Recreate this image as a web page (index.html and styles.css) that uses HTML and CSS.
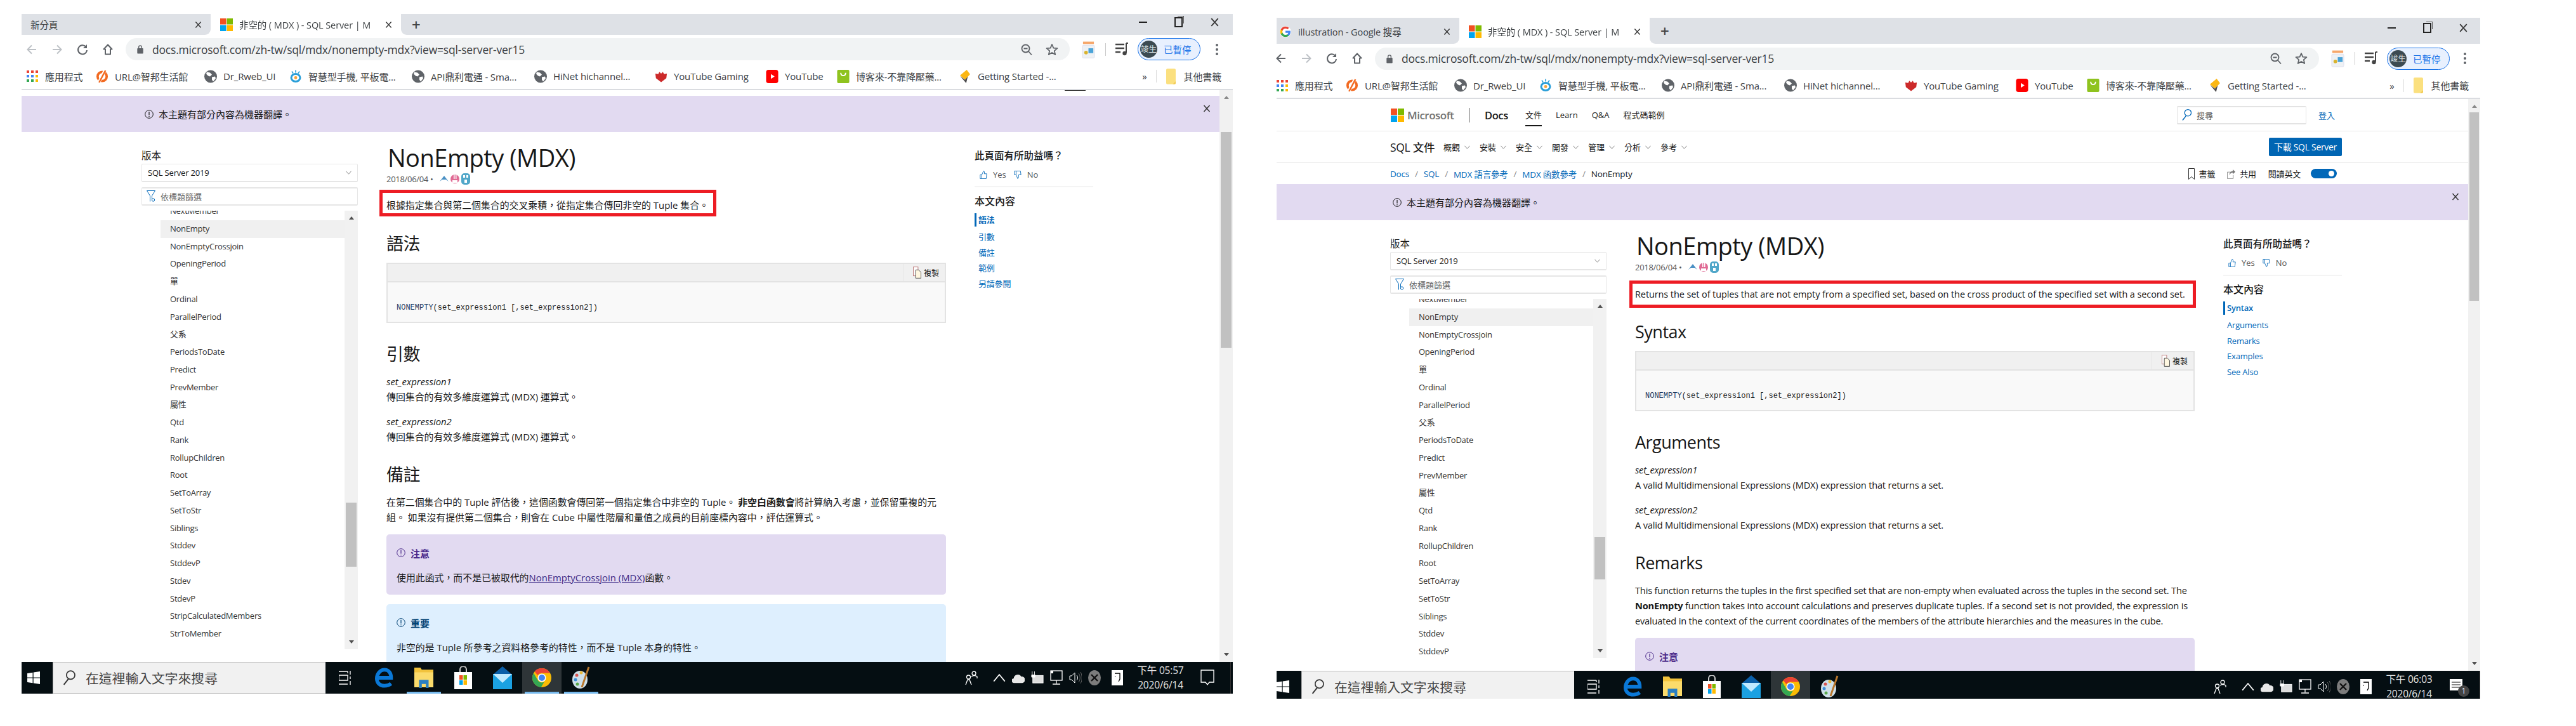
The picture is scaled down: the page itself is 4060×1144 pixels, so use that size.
FILE: index.html
```html
<!DOCTYPE html>
<html lang="zh-Hant">
<head>
  <meta charset="UTF-8">
  <title>NonEmpty (MDX) - two windows</title>
  <link rel="stylesheet" href="styles.css">
</head>
<body>

<!-- shared icons -->
<svg class="sprite" xmlns="http://www.w3.org/2000/svg">
  <symbol id="ms" viewBox="0 0 20 20"><rect width="9.5" height="9.5" fill="#f25022"/><rect x="10.5" width="9.5" height="9.5" fill="#7fba00"/><rect y="10.5" width="9.5" height="9.5" fill="#00a4ef"/><rect x="10.5" y="10.5" width="9.5" height="9.5" fill="#ffb900"/></symbol>
  <symbol id="google" viewBox="0 0 24 24"><circle cx="12" cy="12" r="12" fill="#fff"/><path fill="#4285F4" d="M22.56 12.25c0-.78-.07-1.53-.2-2.25H12v4.26h5.92c-.26 1.37-1.04 2.53-2.21 3.31v2.77h3.57c2.08-1.92 3.28-4.74 3.28-8.09z"/><path fill="#34A853" d="M12 23c2.97 0 5.46-.98 7.28-2.66l-3.57-2.77c-.98.66-2.23 1.06-3.71 1.06-2.86 0-5.29-1.93-6.16-4.53H2.18v2.84C3.99 20.53 7.7 23 12 23z"/><path fill="#FBBC05" d="M5.84 14.09c-.22-.66-.35-1.36-.35-2.09s.13-1.43.35-2.09V7.07H2.18C1.43 8.55 1 10.22 1 12s.43 3.45 1.18 4.93l3.66-2.84z"/><path fill="#EA4335" d="M12 5.38c1.62 0 3.06.56 4.21 1.64l3.15-3.15C17.45 2.09 14.97 1 12 1 7.7 1 3.99 3.47 2.18 7.07l3.66 2.84c.87-2.6 3.3-4.53 6.16-4.53z"/></symbol>
  <symbol id="close" viewBox="0 0 12 12"><path d="M1.5 1 10.5 11M10.5 1 1.5 11" fill="none" stroke="#333" stroke-width="1.5"/></symbol>
  <symbol id="back" viewBox="0 0 20 20"><path d="M17 10H4M10 3.5 3.5 10l6.5 6.5" fill="none" stroke="currentColor" stroke-width="2"/></symbol>
  <symbol id="forward" viewBox="0 0 20 20"><path d="M3 10h13M10 3.5l6.5 6.5-6.5 6.5" fill="none" stroke="currentColor" stroke-width="2"/></symbol>
  <symbol id="reload" viewBox="0 0 20 20"><path d="M15.5 6A7 7 0 1 0 17 11" fill="none" stroke="#5f6368" stroke-width="2"/><path d="M17 2v6h-6z" fill="#5f6368"/></symbol>
  <symbol id="home" viewBox="0 0 20 20"><path d="M10 2.5 3.5 9.5H6v8h8v-8h2.5z" fill="none" stroke="#5f6368" stroke-width="2" stroke-linejoin="round"/></symbol>
  <symbol id="lock" viewBox="0 0 12 16"><path d="M3.5 7V4.5a2.5 2.5 0 0 1 5 0V7" fill="none" stroke="#5f6368" stroke-width="1.5"/><rect x="1" y="6.5" width="10" height="9" rx="1" fill="#5f6368"/></symbol>
  <symbol id="zoomout" viewBox="0 0 20 20"><circle cx="8.5" cy="8.5" r="6" fill="none" stroke="#5f6368" stroke-width="1.8"/><path d="M13 13l5 5.5M5.5 8.5h6" stroke="#5f6368" stroke-width="1.8"/></symbol>
  <symbol id="star" viewBox="0 0 20 20"><path d="M10 2l2.4 5.6 6 .5-4.6 4 1.4 5.9L10 14.9 4.8 18l1.4-5.9-4.6-4 6-.5z" fill="none" stroke="#5f6368" stroke-width="1.8" stroke-linejoin="round"/></symbol>
  <symbol id="ext" viewBox="0 0 22 30"><rect x="1" y="8" width="20" height="21" rx="2" fill="#eef1f4" stroke="#dde"/><path d="M2 2h18v4H2z" fill="#f6a76b"/><circle cx="7" cy="20" r="3" fill="#d9b32e"/><rect x="11" y="13" width="8" height="8" fill="#4aa3d8"/></symbol>
  <symbol id="queue" viewBox="0 0 22 22"><path d="M1 3h14M1 9h14M1 15h8" stroke="#444" stroke-width="2.4"/><path d="M18 1v15" stroke="#444" stroke-width="2"/><circle cx="15.5" cy="17" r="3.2" fill="#444"/><path d="M18 1h3" stroke="#444" stroke-width="2"/></symbol>
  <symbol id="apps" viewBox="0 0 18 18"><g fill="#ea4335"><rect width="4" height="4"/><rect x="7" width="4" height="4"/><rect x="14" width="4" height="4"/></g><g fill="#4285f4"><rect y="7" width="4" height="4"/><rect x="7" y="7" width="4" height="4"/></g><rect x="14" y="7" width="4" height="4" fill="#fbbc05"/><g fill="#34a853"><rect y="14" width="4" height="4"/><rect x="7" y="14" width="4" height="4"/></g><rect x="14" y="14" width="4" height="4" fill="#fbbc05"/></symbol>
  <symbol id="url" viewBox="0 0 20 22"><circle cx="10" cy="11" r="7.5" fill="none" stroke="#f26a21" stroke-width="4"/><path d="M15 0 4 22" stroke="#fff" stroke-width="5"/><path d="M15.5 1 5 21" stroke="#f26a21" stroke-width="2.6"/></symbol>
  <symbol id="globe" viewBox="0 0 20 20"><circle cx="10" cy="10" r="10" fill="#5f6368"/><path d="M4 3l5 1 3 3-3 3-3-1-3-3zM12 11l5-1 1 3-4 5-2-3z" fill="#fff"/></symbol>
  <symbol id="sinaish" viewBox="0 0 20 20"><ellipse cx="10" cy="12" rx="7" ry="6" fill="none" stroke="#2a9fd8" stroke-width="3"/><circle cx="10" cy="12" r="2.4" fill="#f4a63c"/><path d="M10 0v4M4 2l2 3M16 2l-2 3" stroke="#2a9fd8" stroke-width="1.6"/></symbol>
  <symbol id="ytg" viewBox="0 0 22 22"><path d="M1 6l5 1 2-4 3 3 3-3 2 4 5-1-1 8-9 7-9-7z" fill="#cc2a2a"/></symbol>
  <symbol id="yt" viewBox="0 0 20 22"><rect width="20" height="22" rx="4" fill="#f00"/><path d="M8 7l6 4-6 4z" fill="#fff"/></symbol>
  <symbol id="bag" viewBox="0 0 20 22"><rect width="20" height="22" rx="2" fill="#8fc31f"/><path d="M6 5c0 6 8 6 8 0" fill="none" stroke="#fff" stroke-width="2"/></symbol>
  <symbol id="diamond" viewBox="0 0 20 24"><path d="M13 0l6 8-9 10-9-8z" fill="#fbb714"/><path d="M1 11l9 7 5-6-3 12z" fill="#4d4d4f"/></symbol>
  <symbol id="folder" viewBox="0 0 16 26"><rect width="16" height="26" rx="2" fill="#fbe07f"/><path d="M11 26l5-5v3a2 2 0 0 1-2 2z" fill="#f2cb55"/></symbol>
  <symbol id="chev" viewBox="0 0 10 6"><path d="M.5.5 5 5.5 9.5.5" fill="none" stroke="#777" stroke-width="1"/></symbol>
  <symbol id="info" viewBox="0 0 14 14"><circle cx="7" cy="7" r="6.3" fill="none" stroke="currentColor" stroke-width="1"/><path d="M7 3v5.5M7 10v1.2" stroke="currentColor" stroke-width="1.2"/></symbol>
  <symbol id="funnel" viewBox="0 0 14 20"><path d="M.5 1h13L8.5 9v5M5.5 9 .5 1M5.5 9v9" fill="none" stroke="#0067b8" stroke-width="1"/><circle cx="10.5" cy="15.5" r="2.2" fill="none" stroke="#0067b8"/></symbol>
  <symbol id="thumbup" viewBox="0 0 14 16"><path d="M1 8h3v7H1zM4 8l3-7c2 0 2 2 1.500 5H13l-1 9H4" fill="none" stroke="#0067b8" stroke-width="1"/></symbol>
  <symbol id="thumbdown" viewBox="0 0 14 16"><path d="M1 1h3v7H1zM4 1h8l1 7H8.500c.5 3 .5 5-1.500 7L4 8" fill="none" stroke="#0067b8" stroke-width="1"/></symbol>
  <symbol id="copy" viewBox="0 0 14 20"><rect x=".5" y=".5" width="8" height="15" fill="#fff" stroke="#b77"/><path d="M4.500 5.500h5l4 4v10h-9z" fill="#fff7e0" stroke="#444"/></symbol>
  <symbol id="glass" viewBox="0 0 16 20"><circle cx="10" cy="6.500" r="5.500" fill="none" stroke="currentColor" stroke-width="1.400"/><path d="M7 11.500 1 19" stroke="currentColor" stroke-width="1.600"/></symbol>
  <symbol id="bookmark" viewBox="0 0 10 18"><path d="M.5.5h9v17L5 13.500.5 17.500z" fill="none" stroke="#333"/></symbol>
  <symbol id="share" viewBox="0 0 14 18"><path d="M.5 6.500h6M.5 6.500v11h10v-6" fill="none" stroke="#888"/><path d="M4 12c0-5 3-7 6-7V2l4 4-4 4V7.500c-3 0-4.500 1.500-6 4.500z" fill="#777"/></symbol>
  <symbol id="avatar-a" viewBox="0 0 14 14"><path d="M0 11 7 2l7 9-4-3H4z" fill="#4a90c4"/></symbol>
  <symbol id="avatar-b" viewBox="0 0 14 18"><rect y="2" width="14" height="14" rx="7" fill="#e06a94"/><path d="M5 1h1.500v8H5zM8 1h1.500v8H8zM3 11h8v4H3z" fill="#fff"/></symbol>
  <symbol id="avatar-c" viewBox="0 0 14 18"><rect width="14" height="18" rx="5" fill="#51a7c9"/><path d="M3 3h3v4H3zM8 3h3v4H8zM5 10h4v5H5z" fill="#fff"/></symbol>
  <symbol id="win" viewBox="0 0 20 20"><path d="M0 3l8.500-1.300V9.500H0zM9.700 1.500 20 0v9.500H9.700zM0 10.500h8.500v7.800L0 17zM9.700 10.500H20V20L9.700 18.500z" fill="#fff"/></symbol>
  <symbol id="taskview" viewBox="0 0 20 22"><path d="M0 1h14M0 21h14M14 1v3M0 4v0M0 7h14v8H0zM18 0v6M18 9v4M18 16v6" fill="none" stroke="#fff" stroke-width="1.300"/></symbol>
  <symbol id="edge" viewBox="0 0 26 28"><path d="M4 14h18c0-6-3-11-9-11S2.500 9 2.500 15s4.500 10 10.500 10c4 0 6.500-1 9-3" fill="none" stroke="#0a78d7" stroke-width="5"/></symbol>
  <symbol id="explorer" viewBox="0 0 28 32"><path d="M0 1h9l2 3h17v26H0z" fill="#f2c33c"/><path d="M0 8h28v22H0z" fill="#fbdb6b"/><path d="M7 19h14v12h-4v-6h-6v6H7z" fill="#2a7fc2"/></symbol>
  <symbol id="store" viewBox="0 0 28 36"><path d="M9 9V5a5 5 0 0 1 10 0v4" fill="none" stroke="#ccc" stroke-width="2"/><rect y="9" width="28" height="27" fill="#fff"/><rect x="8" y="14" width="5.500" height="7" fill="#f25022"/><rect x="14.500" y="14" width="5.500" height="7" fill="#7fba00"/><rect x="8" y="22" width="5.500" height="7" fill="#00a4ef"/><rect x="14.500" y="22" width="5.500" height="7" fill="#ffb900"/></symbol>
  <symbol id="mail" viewBox="0 0 30 36"><path d="M0 13 15 0l15 13v5H0z" fill="#0a5fa8"/><rect y="12" width="30" height="24" fill="#1ba1e2"/><path d="M0 12h30L15 26z" fill="#bfe9ff"/></symbol>
  <symbol id="chrome" viewBox="0 0 48 48"><circle cx="24" cy="24" r="24" fill="#fbbc05"/><path d="M24 0a24 24 0 0 1 20.800 12H24a12 12 0 0 0-10.400 6L5.500 8A24 24 0 0 1 24 0z" fill="#ea4335"/><path d="M3.200 12 13.600 30A12 12 0 0 0 30 34.400L22 48A24 24 0 0 1 3.200 12z" fill="#34a853"/><circle cx="24" cy="24" r="10.500" fill="#fff"/><circle cx="24" cy="24" r="8" fill="#4285f4"/></symbol>
  <symbol id="paint" viewBox="0 0 30 36"><ellipse cx="13" cy="21" rx="12" ry="14" fill="#cfe0ea"/><circle cx="8" cy="14" r="2.500" fill="#d9534f"/><circle cx="6" cy="21" r="2.500" fill="#3c8ed8"/><circle cx="9" cy="28" r="2.500" fill="#59a84b"/><circle cx="15" cy="10" r="2.500" fill="#e9b93c"/><path d="M27 1 16 33" stroke="#b9772c" stroke-width="3"/></symbol>
  <symbol id="people" viewBox="0 0 20 24"><circle cx="5.500" cy="11" r="3" fill="none" stroke="#fff" stroke-width="1.300"/><path d="M1 23l3-8h3l3 8" fill="none" stroke="#fff" stroke-width="1.300"/><circle cx="14" cy="5" r="3" fill="none" stroke="#fff" stroke-width="1.300"/><path d="M10 10c3-2 6-2 9 0v3" fill="none" stroke="#fff" stroke-width="1.300"/></symbol>
  <symbol id="caret" viewBox="0 0 16 10"><path d="M1 9.500 8 1l7 8.500" fill="none" stroke="#fff" stroke-width="1.300"/></symbol>
  <symbol id="cloud" viewBox="0 0 22 20"><path d="M4 19a4 4 0 0 1-1-8 7 7 0 0 1 13-3 5.500 5.500 0 0 1 2 11z" fill="#e8e8e8"/></symbol>
  <symbol id="power" viewBox="0 0 22 22"><rect x="3" y="7" width="18" height="13" fill="#ddd" stroke="#fff"/><path d="M2 0v6M6 0v6M1 6h6v4H1z" stroke="#fff" fill="#fff"/></symbol>
  <symbol id="net" viewBox="0 0 20 24"><rect x="1" y="1" width="18" height="15" fill="none" stroke="#fff" stroke-width="1.300"/><path d="M10 16v5M4 22h12" stroke="#fff" stroke-width="1.300"/><rect x="1" y="1" width="4" height="4" fill="#fff"/></symbol>
  <symbol id="sound" viewBox="0 0 20 24"><path d="M1 9h3l5-5v16l-5-5H1z" fill="none" stroke="#fff"/><path d="M12 8c2 2.500 2 5.500 0 8" fill="none" stroke="#fff"/><path d="M15 5c3 4 3 10 0 14M18 3c3 5 3 13 0 18" fill="none" stroke="#666"/></symbol>
  <symbol id="stop" viewBox="0 0 20 24"><ellipse cx="10" cy="12" rx="10" ry="12" fill="#7c7c7c"/><path d="M5 7l10 10M15 7 5 17" stroke="#111" stroke-width="2.400"/></symbol>
  <symbol id="ime" viewBox="0 0 18 24"><rect width="18" height="24" fill="#fff"/><path d="M5 5h8v9l-2 4M5 10h1" fill="none" stroke="#000" stroke-width="1.300"/></symbol>
  <symbol id="bubble" viewBox="0 0 22 26"><path d="M1 1h20v19h-7l-3 4-3-4H1z" fill="none" stroke="#fff" stroke-width="1.300"/></symbol>
  <symbol id="bubble-full" viewBox="0 0 22 26"><path d="M1 1h20v18H1z" fill="#fff"/><path d="M4 6h14M4 10h14M4 14h14" stroke="#111"/></symbol>
</svg>

<!-- left window: zh-tw article -->
<div class="window win-a">
  <div class="tabbar">
    <div class="tab tab-other">
      <span class="tab-title">新分頁</span>
      <svg class="tab-x"><use href="#close"/></svg>
    </div>
    <div class="tab tab-active">
      <svg class="tab-icon"><use href="#ms"/></svg>
      <span class="tab-title tab-fade">非空的 ( MDX ) - SQL Server | M</span>
      <svg class="tab-x"><use href="#close"/></svg>
    </div>
    <div class="tab-rest">
      <span class="tab-plus">+</span>
      <div class="winctl">
        <span class="ctl-min"></span>
        <span class="ctl-max"></span>
        <svg class="ctl-x"><use href="#close"/></svg>
      </div>
    </div>
  </div>

  <div class="toolbar">
    <div class="nav-btn nav-off"><svg class="nav-ic"><use href="#back"/></svg></div>
    <div class="nav-btn nav-off"><svg class="nav-ic"><use href="#forward"/></svg></div>
    <div class="nav-btn"><svg class="nav-ic"><use href="#reload"/></svg></div>
    <div class="nav-btn"><svg class="nav-ic"><use href="#home"/></svg></div>
    <div class="omnibox">
      <svg class="lock"><use href="#lock"/></svg>
      <span class="url">docs.microsoft.com/zh-tw/sql/mdx/nonempty-mdx?view=sql-server-ver15</span>
      <svg class="omni-ic"><use href="#zoomout"/></svg>
      <svg class="omni-ic omni-star"><use href="#star"/></svg>
    </div>
    <div class="ext-cell"><svg class="ext"><use href="#ext"/></svg></div>
    <span class="tool-sep"></span>
    <div class="queue-cell"><svg class="queue"><use href="#queue"/></svg></div>
    <div class="profile"><span class="avatar">竣生</span><span class="paused">已暫停</span></div>
    <div class="dots"><i></i><i></i><i></i></div>
  </div>

  <div class="bookmarks">
    <div class="bm"><svg class="bm-ic bm-apps"><use href="#apps"/></svg>應用程式</div>
    <div class="bm"><svg class="bm-ic"><use href="#url"/></svg>URL@智邦生活館</div>
    <div class="bm"><svg class="bm-ic"><use href="#globe"/></svg>Dr_Rweb_UI</div>
    <div class="bm"><svg class="bm-ic"><use href="#sinaish"/></svg>智慧型手機, 平板電...</div>
    <div class="bm"><svg class="bm-ic"><use href="#globe"/></svg>API鼎利電通 - Sma...</div>
    <div class="bm"><svg class="bm-ic"><use href="#globe"/></svg>HiNet hichannel...</div>
    <div class="bm"><svg class="bm-ic"><use href="#ytg"/></svg>YouTube Gaming</div>
    <div class="bm"><svg class="bm-ic"><use href="#yt"/></svg>YouTube</div>
    <div class="bm"><svg class="bm-ic"><use href="#bag"/></svg>博客來-不靠降壓藥...</div>
    <div class="bm"><svg class="bm-ic"><use href="#diamond"/></svg>Getting Started -...</div>
    <div class="bm-more">»<span class="bm-sep"></span><svg class="bm-folder"><use href="#folder"/></svg>其他書籤</div>
  </div>

  <div class="viewport">
    <div class="page">
      <div class="gap-top"></div>
      <div class="banner">
        <div class="banner-text"><svg class="info"><use href="#info"/></svg>本主題有部分內容為機器翻譯。</div>
        <svg class="banner-x"><use href="#close"/></svg>
      </div>
      <div class="doc">
        <div class="side">
          <div class="side-label">版本</div>
          <div class="picker">SQL Server 2019<svg class="picker-chev"><use href="#chev"/></svg></div>
          <div class="filter"><svg class="filter-ic"><use href="#funnel"/></svg>依標題篩選</div>
          <div class="toc">
            <ul class="toc-list">
              <li>NextMember</li>
              <li class="toc-on">NonEmpty</li>
              <li>NonEmptyCrossjoin</li>
              <li>OpeningPeriod</li>
              <li>單</li>
              <li>Ordinal</li>
              <li>ParallelPeriod</li>
              <li>父系</li>
              <li>PeriodsToDate</li>
              <li>Predict</li>
              <li>PrevMember</li>
              <li>屬性</li>
              <li>Qtd</li>
              <li>Rank</li>
              <li>RollupChildren</li>
              <li>Root</li>
              <li>SetToArray</li>
              <li>SetToStr</li>
              <li>Siblings</li>
              <li>Stddev</li>
              <li>StddevP</li>
              <li>Stdev</li>
              <li>StdevP</li>
              <li>StripCalculatedMembers</li>
              <li>StrToMember</li>
            </ul>
            <div class="bar bar-toc"><span class="arrow-up"></span><span class="thumb"></span><span class="arrow-down"></span></div>
          </div>
        </div>

        <div class="article">
          <h1>NonEmpty (MDX)</h1>
          <div class="meta">2018/06/04 • <svg class="who"><use href="#avatar-a"/></svg><svg class="who"><use href="#avatar-b"/></svg><svg class="who"><use href="#avatar-c"/></svg></div>
          <p class="lede">根據指定集合與第二個集合的交叉乘積，從指定集合傳回非空的 Tuple 集合。</p>
          <h2 class="h-first">語法</h2>
          <div class="code">
            <div class="code-head"><div class="copy"><svg class="copy-ic"><use href="#copy"/></svg>複製</div></div>
            <div class="code-body"><span class="kw">NONEMPTY</span>(set_expression1 [,set_expression2])</div>
          </div>
          <h2>引數</h2>
          <p class="arg"><em>set_expression1</em><br>傳回集合的有效多維度運算式 (MDX) 運算式。</p>
          <p class="arg"><em>set_expression2</em><br>傳回集合的有效多維度運算式 (MDX) 運算式。</p>
          <h2>備註</h2>
          <p class="para">在第二個集合中的 Tuple 評估後，這個函數會傳回第一個指定集合中非空的 Tuple。 <b>非空白函數會</b>將計算納入考慮，並保留重複的元<br>組。 如果沒有提供第二個集合，則會在 Cube 中屬性階層和量值之成員的目前座標內容中，評估運算式。</p>
          <div class="alert alert-note">
            <div class="alert-title"><svg class="info"><use href="#info"/></svg>注意</div>
            <p>使用此函式，而不是已被取代的<a href="#">NonEmptyCrossjoin (MDX)</a>函數。</p>
          </div>
          <div class="alert alert-tip">
            <div class="alert-title"><svg class="info"><use href="#info"/></svg>重要</div>
            <p>非空的是 Tuple 所參考之資料格參考的特性，而不是 Tuple 本身的特性。</p>
          </div>
        </div>

        <div class="rail">
          <div class="rail-q">此頁面有所助益嗎？</div>
          <div class="vote"><svg class="thumb-ic"><use href="#thumbup"/></svg><span class="vote-y">Yes</span><svg class="thumb-ic"><use href="#thumbdown"/></svg><span>No</span></div>
          <div class="rail-title">本文內容</div>
          <ul class="rail-links">
            <li class="rail-on">語法</li>
            <li>引數</li>
            <li>備註</li>
            <li>範例</li>
            <li>另請參閱</li>
          </ul>
        </div>
      </div>
    </div>
    <div class="bar bar-page"><span class="arrow-up"></span><span class="thumb"></span><span class="arrow-down"></span></div>
  </div>

  <div class="taskbar">
    <div class="tb-start"><svg class="tb-win"><use href="#win"/></svg></div>
    <div class="tb-search"><svg class="tb-glass"><use href="#glass"/></svg>在這裡輸入文字來搜尋</div>
    <div class="tb-apps">
      <div class="tb-cell"><svg class="tb-ic-task"><use href="#taskview"/></svg></div>
      <div class="tb-cell"><svg class="tb-ic"><use href="#edge"/></svg></div>
      <div class="tb-cell tb-open"><svg class="tb-ic"><use href="#explorer"/></svg></div>
      <div class="tb-cell"><svg class="tb-ic"><use href="#store"/></svg></div>
      <div class="tb-cell"><svg class="tb-ic"><use href="#mail"/></svg></div>
      <div class="tb-cell tb-now tb-open"><svg class="tb-ic"><use href="#chrome"/></svg></div>
      <div class="tb-cell tb-open"><svg class="tb-ic"><use href="#paint"/></svg></div>
    </div>
    <div class="tray">
      <svg class="tray-ic tray-people"><use href="#people"/></svg>
      <svg class="tray-ic"><use href="#caret"/></svg>
      <svg class="tray-ic"><use href="#cloud"/></svg>
      <svg class="tray-ic"><use href="#power"/></svg>
      <svg class="tray-ic"><use href="#net"/></svg>
      <svg class="tray-ic"><use href="#sound"/></svg>
      <svg class="tray-ic"><use href="#stop"/></svg>
      <svg class="tray-ic tray-ime"><use href="#ime"/></svg>
      <div class="clock">下午 05:57<br>2020/6/14</div>
      <div class="notify"><svg class="notify-ic"><use href="#bubble"/></svg></div>
    </div>
  </div>
</div>

<!-- right window: en-us article -->
<div class="window win-b">
  <div class="tabbar">
    <div class="tab tab-other">
      <svg class="tab-icon tab-icon-g"><use href="#google"/></svg>
      <span class="tab-title">illustration - Google 搜尋</span>
      <svg class="tab-x"><use href="#close"/></svg>
    </div>
    <div class="tab tab-active">
      <svg class="tab-icon"><use href="#ms"/></svg>
      <span class="tab-title tab-fade">非空的 ( MDX ) - SQL Server | M</span>
      <svg class="tab-x"><use href="#close"/></svg>
    </div>
    <div class="tab-rest">
      <span class="tab-plus">+</span>
      <div class="winctl">
        <span class="ctl-min"></span>
        <span class="ctl-max"></span>
        <svg class="ctl-x"><use href="#close"/></svg>
      </div>
    </div>
  </div>

  <div class="toolbar">
    <div class="nav-btn"><svg class="nav-ic"><use href="#back"/></svg></div>
    <div class="nav-btn nav-off"><svg class="nav-ic"><use href="#forward"/></svg></div>
    <div class="nav-btn"><svg class="nav-ic"><use href="#reload"/></svg></div>
    <div class="nav-btn"><svg class="nav-ic"><use href="#home"/></svg></div>
    <div class="omnibox">
      <svg class="lock"><use href="#lock"/></svg>
      <span class="url">docs.microsoft.com/zh-tw/sql/mdx/nonempty-mdx?view=sql-server-ver15</span>
      <svg class="omni-ic"><use href="#zoomout"/></svg>
      <svg class="omni-ic omni-star"><use href="#star"/></svg>
    </div>
    <div class="ext-cell"><svg class="ext"><use href="#ext"/></svg></div>
    <span class="tool-sep"></span>
    <div class="queue-cell"><svg class="queue"><use href="#queue"/></svg></div>
    <div class="profile"><span class="avatar">竣生</span><span class="paused">已暫停</span></div>
    <div class="dots"><i></i><i></i><i></i></div>
  </div>

  <div class="bookmarks">
    <div class="bm"><svg class="bm-ic bm-apps"><use href="#apps"/></svg>應用程式</div>
    <div class="bm"><svg class="bm-ic"><use href="#url"/></svg>URL@智邦生活館</div>
    <div class="bm"><svg class="bm-ic"><use href="#globe"/></svg>Dr_Rweb_UI</div>
    <div class="bm"><svg class="bm-ic"><use href="#sinaish"/></svg>智慧型手機, 平板電...</div>
    <div class="bm"><svg class="bm-ic"><use href="#globe"/></svg>API鼎利電通 - Sma...</div>
    <div class="bm"><svg class="bm-ic"><use href="#globe"/></svg>HiNet hichannel...</div>
    <div class="bm"><svg class="bm-ic"><use href="#ytg"/></svg>YouTube Gaming</div>
    <div class="bm"><svg class="bm-ic"><use href="#yt"/></svg>YouTube</div>
    <div class="bm"><svg class="bm-ic"><use href="#bag"/></svg>博客來-不靠降壓藥...</div>
    <div class="bm"><svg class="bm-ic"><use href="#diamond"/></svg>Getting Started -...</div>
    <div class="bm-more">»<span class="bm-sep"></span><svg class="bm-folder"><use href="#folder"/></svg>其他書籤</div>
  </div>

  <div class="viewport">
    <div class="page">
      <div class="site-top">
        <div class="site-left">
          <svg class="site-ms"><use href="#ms"/></svg>
          <span class="site-brand">Microsoft</span>
          <span class="site-div"></span>
          <span class="site-docs">Docs</span>
          <span class="site-link site-cur">文件</span>
          <span class="site-link">Learn</span>
          <span class="site-link">Q&amp;A</span>
          <span class="site-link">程式碼範例</span>
        </div>
        <div class="site-search"><svg class="site-glass"><use href="#glass"/></svg>搜尋</div>
        <span class="site-login">登入</span>
      </div>
      <div class="site-sub">
        <span class="sub-title">SQL 文件</span>
        <span class="sub-item">概觀<svg class="sub-chev"><use href="#chev"/></svg></span>
        <span class="sub-item">安裝<svg class="sub-chev"><use href="#chev"/></svg></span>
        <span class="sub-item">安全<svg class="sub-chev"><use href="#chev"/></svg></span>
        <span class="sub-item">開發<svg class="sub-chev"><use href="#chev"/></svg></span>
        <span class="sub-item">管理<svg class="sub-chev"><use href="#chev"/></svg></span>
        <span class="sub-item">分析<svg class="sub-chev"><use href="#chev"/></svg></span>
        <span class="sub-item">參考<svg class="sub-chev"><use href="#chev"/></svg></span>
        <span class="sub-btn">下載 SQL Server</span>
      </div>
      <div class="crumbs">
        <a href="#">Docs</a><span class="crumb-sep">/</span>
        <a href="#">SQL</a><span class="crumb-sep">/</span>
        <a href="#">MDX 語言參考</a><span class="crumb-sep">/</span>
        <a href="#">MDX 函數參考</a><span class="crumb-sep">/</span>
        <span>NonEmpty</span>
        <div class="crumb-tools">
          <svg class="crumb-book"><use href="#bookmark"/></svg><span class="crumb-t1">書籤</span>
          <svg class="crumb-share"><use href="#share"/></svg><span class="crumb-t2">共用</span>
          <span class="crumb-t3">閱讀英文</span>
          <span class="toggle"></span>
        </div>
      </div>
      <div class="banner">
        <div class="banner-text"><svg class="info"><use href="#info"/></svg>本主題有部分內容為機器翻譯。</div>
        <svg class="banner-x"><use href="#close"/></svg>
      </div>
      <div class="doc">
        <div class="side">
          <div class="side-label">版本</div>
          <div class="picker">SQL Server 2019<svg class="picker-chev"><use href="#chev"/></svg></div>
          <div class="filter"><svg class="filter-ic"><use href="#funnel"/></svg>依標題篩選</div>
          <div class="toc">
            <ul class="toc-list">
              <li>NextMember</li>
              <li class="toc-on">NonEmpty</li>
              <li>NonEmptyCrossjoin</li>
              <li>OpeningPeriod</li>
              <li>單</li>
              <li>Ordinal</li>
              <li>ParallelPeriod</li>
              <li>父系</li>
              <li>PeriodsToDate</li>
              <li>Predict</li>
              <li>PrevMember</li>
              <li>屬性</li>
              <li>Qtd</li>
              <li>Rank</li>
              <li>RollupChildren</li>
              <li>Root</li>
              <li>SetToArray</li>
              <li>SetToStr</li>
              <li>Siblings</li>
              <li>Stddev</li>
              <li>StddevP</li>
            </ul>
            <div class="bar bar-toc"><span class="arrow-up"></span><span class="thumb"></span><span class="arrow-down"></span></div>
          </div>
        </div>

        <div class="article">
          <h1>NonEmpty (MDX)</h1>
          <div class="meta">2018/06/04 • <svg class="who"><use href="#avatar-a"/></svg><svg class="who"><use href="#avatar-b"/></svg><svg class="who"><use href="#avatar-c"/></svg></div>
          <p class="lede">Returns the set of tuples that are not empty from a specified set, based on the cross product of the specified set with a second set.</p>
          <h2 class="h-first">Syntax</h2>
          <div class="code">
            <div class="code-head"><div class="copy"><svg class="copy-ic"><use href="#copy"/></svg>複製</div></div>
            <div class="code-body"><span class="kw">NONEMPTY</span>(set_expression1 [,set_expression2])</div>
          </div>
          <h2>Arguments</h2>
          <p class="arg"><em>set_expression1</em><br>A valid Multidimensional Expressions (MDX) expression that returns a set.</p>
          <p class="arg"><em>set_expression2</em><br>A valid Multidimensional Expressions (MDX) expression that returns a set.</p>
          <h2>Remarks</h2>
          <p class="para">This function returns the tuples in the first specified set that are non-empty when evaluated across the tuples in the second set. The<br><b>NonEmpty</b> function takes into account calculations and preserves duplicate tuples. If a second set is not provided, the expression is<br>evaluated in the context of the current coordinates of the members of the attribute hierarchies and the measures in the cube.</p>
          <div class="alert alert-note">
            <div class="alert-title"><svg class="info"><use href="#info"/></svg>注意</div>
          </div>
        </div>

        <div class="rail">
          <div class="rail-q">此頁面有所助益嗎？</div>
          <div class="vote"><svg class="thumb-ic"><use href="#thumbup"/></svg><span class="vote-y">Yes</span><svg class="thumb-ic"><use href="#thumbdown"/></svg><span>No</span></div>
          <div class="rail-title">本文內容</div>
          <ul class="rail-links">
            <li class="rail-on">Syntax</li>
            <li>Arguments</li>
            <li>Remarks</li>
            <li>Examples</li>
            <li>See Also</li>
          </ul>
        </div>
      </div>
    </div>
    <div class="bar bar-page"><span class="arrow-up"></span><span class="thumb"></span><span class="arrow-down"></span></div>
  </div>

  <div class="taskbar">
    <div class="tb-start"><svg class="tb-win"><use href="#win"/></svg></div>
    <div class="tb-search"><svg class="tb-glass"><use href="#glass"/></svg>在這裡輸入文字來搜尋</div>
    <div class="tb-apps">
      <div class="tb-cell"><svg class="tb-ic-task"><use href="#taskview"/></svg></div>
      <div class="tb-cell"><svg class="tb-ic"><use href="#edge"/></svg></div>
      <div class="tb-cell"><svg class="tb-ic"><use href="#explorer"/></svg></div>
      <div class="tb-cell"><svg class="tb-ic"><use href="#store"/></svg></div>
      <div class="tb-cell"><svg class="tb-ic"><use href="#mail"/></svg></div>
      <div class="tb-cell tb-now"><svg class="tb-ic"><use href="#chrome"/></svg></div>
      <div class="tb-cell"><svg class="tb-ic"><use href="#paint"/></svg></div>
    </div>
    <div class="tray">
      <svg class="tray-ic tray-people"><use href="#people"/></svg>
      <svg class="tray-ic"><use href="#caret"/></svg>
      <svg class="tray-ic"><use href="#cloud"/></svg>
      <svg class="tray-ic"><use href="#power"/></svg>
      <svg class="tray-ic"><use href="#net"/></svg>
      <svg class="tray-ic"><use href="#sound"/></svg>
      <svg class="tray-ic"><use href="#stop"/></svg>
      <svg class="tray-ic tray-ime"><use href="#ime"/></svg>
      <div class="clock">下午 06:03<br>2020/6/14</div>
      <div class="notify"><svg class="notify-ic"><use href="#bubble-full"/></svg><span class="notify-badge">1</span></div>
    </div>
  </div>
</div>

</body>
</html>
```

FILE: styles.css
```css
html, body {
  margin: 0;
  height: 100%;
  background-color: white;
  color: #171717;
  font-family: "Open Sans", "Noto Sans CJK TC", sans-serif;
}

body {
  display: flex;
  align-items: flex-start;
  width: 4060px;
  height: 1144px;
  overflow: hidden;
  padding-left: 34px;
  box-sizing: border-box;
}

.sprite {
  display: none;
}

/* Windows */
.window {
  display: flex;
  flex-direction: column;
  flex: none;
}

.win-a {
  width: 1909px;
  margin-top: 22px;
}

.win-b {
  width: 1897px;
  margin-top: 28px;
  margin-left: 69px;
}

/* Tab strip */
.tabbar {
  display: flex;
  background-color: white;
}

.win-a .tabbar {
  height: 33px;
}

.win-b .tabbar {
  height: 41px;
}

.tab {
  display: flex;
  align-items: center;
  box-sizing: border-box;
  font-size: 14.500px;
  color: #3c4043;
  letter-spacing: -0.1px;
}

.win-b .tab {
  padding-top: 2px;
}

.tab-other {
  width: 298px;
  padding-left: 14px;
  background-color: #dee1e6;
  border-bottom-right-radius: 9px;
}

.win-b .tab-other {
  width: 288px;
  padding-left: 5px;
}

.tab-active {
  width: 300px;
  padding-left: 15px;
  background-color: white;
}

.tab-icon {
  width: 20px;
  height: 20px;
  margin-right: 10px;
  flex: none;
}

.tab-icon-g {
  width: 18px;
  height: 20px;
  margin-right: 11px;
}

.tab-title {
  flex: 1;
  white-space: nowrap;
  overflow: hidden;
}

.tab-fade {
  -webkit-mask-image: linear-gradient(to right, black 92%, transparent);
  mask-image: linear-gradient(to right, black 92%, transparent);
}

.tab-x {
  width: 11px;
  height: 12px;
  margin: 0 14px 0 8px;
  flex: none;
}

.tab-rest {
  flex: 1;
  display: flex;
  align-items: center;
  justify-content: space-between;
  background-color: #dee1e6;
  border-bottom-left-radius: 9px;
}

.tab-plus {
  margin-left: 17px;
  font-size: 24px;
  font-weight: 600;
  color: #444;
}

.winctl {
  display: flex;
  align-items: center;
  margin-bottom: 8px;
  margin-right: 21px;
}

.win-b .winctl {
  margin-bottom: 10px;
  margin-right: 19px;
}

.ctl-min {
  width: 13px;
  height: 2px;
  background-color: #222;
  margin-right: 43px;
}

.ctl-max {
  position: relative;
  width: 9px;
  height: 12px;
  border: 2px solid #222;
  margin-right: 43px;
}

.ctl-max::before {
  content: "";
  position: absolute;
  right: -4px;
  top: -4px;
  width: 9px;
  height: 11px;
  border-top: 1px solid #555;
  border-right: 1px solid #555;
}

.ctl-x {
  width: 15px;
  height: 14px;
}

/* Toolbar */
.toolbar {
  display: flex;
  align-items: center;
  background-color: white;
}

.win-a .toolbar {
  height: 45px;
  margin-left: -4px;
}

.win-b .toolbar {
  height: 46px;
  margin-left: -13px;
}

.nav-btn {
  width: 40px;
  display: flex;
  justify-content: center;
  flex: none;
  color: #5f6368;
}

.nav-off {
  color: #bdc1c6;
}

.nav-ic {
  width: 20px;
  height: 20px;
}

.omnibox {
  flex: 1;
  display: flex;
  align-items: center;
  height: 35px;
  margin-left: 8px;
  padding: 0 6px 0 17px;
  border-radius: 18px;
  background-color: #f1f3f4;
  min-width: 0;
}

.lock {
  width: 12px;
  height: 15px;
  margin-right: 13px;
}

.url {
  flex: 1;
  font-size: 17.5px;
  color: #3c4043;
  letter-spacing: -0.2px;
}

.omni-ic {
  width: 20px;
  height: 20px;
  margin-right: 20px;
}

.omni-star {
  margin-right: 12px;
}

.ext-cell {
  width: 56px;
  display: flex;
  justify-content: center;
  padding-left: 2px;
  box-sizing: border-box;
}

.ext {
  width: 21px;
  height: 30px;
}

.tool-sep {
  width: 1px;
  height: 20px;
  background-color: #c8c8c8;
}

.queue-cell {
  width: 50px;
  display: flex;
  justify-content: center;
}

.queue {
  width: 22px;
  height: 22px;
}

.profile {
  display: flex;
  align-items: center;
  box-sizing: border-box;
  width: 99px;
  height: 35px;
  padding-left: 3px;
  border: 1.5px solid #1a73e8;
  border-radius: 18px;
  background-color: #e8f0fe;
  color: #1a73e8;
  font-size: 14.5px;
}

.avatar {
  width: 27px;
  height: 27px;
  flex: none;
  border-radius: 50%;
  background-color: #3c4a52;
  color: #dfe5e8;
  font-size: 12.5px;
  line-height: 27px;
  text-align: center;
  margin-right: 10px;
}

.dots {
  display: flex;
  flex-direction: column;
  align-items: center;
  gap: 3px;
  width: 51px;
}

.win-b .dots {
  width: 48px;
}

.dots i {
  width: 4px;
  height: 4px;
  border-radius: 50%;
  background-color: #5f6368;
}

/* Bookmarks */
.bookmarks {
  display: grid;
  grid-template-columns: 109px 171px 134px 193px 193px 190px 175px 112px 192px 1fr auto;
  align-items: center;
  background-color: white;
  border-bottom: 2px solid #dadce0;
  font-size: 15px;
  color: #3c4043;
  letter-spacing: -0.15px;
  white-space: nowrap;
}

.win-a .bookmarks {
  height: 40px;
  padding-left: 8px;
}

.win-b .bookmarks {
  height: 39px;
  padding-left: 0;
}

.bm {
  display: flex;
  align-items: center;
}

.bm-ic {
  width: 20px;
  height: 21px;
  margin-right: 10px;
  flex: none;
}

.bm-apps {
  width: 18px;
  height: 18px;
  margin-right: 11px;
}

.bm-more {
  display: flex;
  align-items: center;
  grid-column: 11;
  padding-right: 18px;
}

.bm-sep {
  width: 1px;
  height: 20px;
  margin: 0 15px 0 14px;
  background-color: #ddd;
}

.bm-folder {
  width: 15px;
  height: 25px;
  margin-right: 13px;
}

/* Page area */
.viewport {
  display: flex;
  height: 901px;
  background-color: white;
}

.page {
  flex: 1;
  min-width: 0;
  display: flex;
  flex-direction: column;
  overflow: hidden;
}

.gap-top {
  display: flex;
  height: 9px;
  flex: none;
}

.gap-top::after {
  content: "";
  width: 33px;
  height: 1px;
  margin-left: 1644px;
  background-color: #222;
}

.banner {
  flex: none;
  display: flex;
  justify-content: space-between;
  align-items: center;
  height: 57px;
  background-color: #e2daf1;
  padding-right: 14px;
  font-size: 15px;
}

.win-a .banner {
  padding-left: 194px;
}

.win-b .banner {
  padding-left: 183px;
}

.banner-text {
  display: flex;
  align-items: center;
}

.info {
  width: 14px;
  height: 14px;
  margin-right: 8px;
  flex: none;
}

.banner-x {
  align-self: flex-start;
  margin-top: 14px;
  width: 12px;
  height: 12px;
}

/* Scrollbars */
.bar {
  position: relative;
  flex: none;
  display: flex;
  flex-direction: column;
  background-color: #f1f1f1;
}

.win-a .bar-page {
  width: 21px;
}

.win-b .bar-page {
  width: 19px;
}

.bar-toc {
  width: 21px;
}

.thumb {
  display: block;
  margin: 0 2px;
  background-color: #c1c1c1;
}

.win-a .bar-page .thumb {
  margin-top: 66px;
  height: 340px;
}

.win-b .bar-page .thumb {
  margin-top: 21px;
  height: 297px;
}

.win-a .bar-toc .thumb {
  margin-top: 460px;
  height: 101px;
}

.win-b .bar-toc .thumb {
  margin-top: 375px;
  height: 67px;
}

.arrow-up,
.arrow-down {
  position: absolute;
  left: 50%;
  margin-left: -4px;
  width: 0;
  height: 0;
  border-left: 4px solid transparent;
  border-right: 4px solid transparent;
}

.arrow-up {
  top: 9px;
  border-bottom: 5px solid #505050;
}

.arrow-down {
  bottom: 9px;
  border-top: 5px solid #505050;
}

.bar-page .arrow-up {
  border-bottom-color: #8a8a8a;
}

/* Site header (right window only) */
.site-top {
  flex: none;
  display: flex;
  align-items: center;
  height: 50px;
  padding-left: 180px;
  border-bottom: 1px solid #e6e6e6;
  font-size: 13px;
}

.site-left {
  display: flex;
  align-items: center;
  flex: none;
  height: 100%;
  width: 1239px;
}

.site-ms {
  width: 21px;
  height: 21px;
  margin-right: 5px;
}

.site-brand {
  width: 73px;
  font-size: 17px;
  font-weight: 600;
  color: #737373;
  letter-spacing: -0.5px;
}

.site-div {
  width: 1px;
  height: 23px;
  margin: 0 24px;
  background-color: #555;
}

.site-docs {
  width: 37px;
  margin-right: 27px;
  font-size: 16.5px;
  font-weight: 600;
  letter-spacing: -0.4px;
}

.site-link {
  margin-right: 22px;
  line-height: 36px;
}

.site-cur {
  position: relative;
}

.site-cur::after {
  content: "";
  position: absolute;
  left: 0;
  right: 0;
  bottom: 0;
  height: 2px;
  background-color: #171717;
}

.site-search {
  display: flex;
  align-items: center;
  box-sizing: border-box;
  flex: none;
  width: 204px;
  height: 29px;
  border: 1px solid #e3e3e3;
  border-top-width: 2px;
  border-bottom-width: 2px;
  border-radius: 2px;
  padding-left: 7px;
  color: #555;
}

.site-glass {
  width: 15px;
  height: 20px;
  margin-right: 8px;
  color: #0067b8;
}

.site-login {
  margin-left: 19px;
  color: #0067b8;
}

.site-sub {
  flex: none;
  display: flex;
  align-items: center;
  box-sizing: border-box;
  height: 50px;
  padding-left: 179px;
  border-bottom: 1px solid #e6e6e6;
  font-size: 13px;
}

.sub-title {
  width: 84px;
  font-size: 17.500px;
  font-weight: 500;
  letter-spacing: -0.3px;
  white-space: nowrap;
}

.sub-item {
  display: flex;
  align-items: center;
  width: 57px;
}

.sub-chev {
  width: 9px;
  height: 6px;
  margin-left: 7px;
}

.sub-btn {
  margin-left: 902px;
  width: 115px;
  height: 29px;
  border-radius: 2px;
  background-color: #0065b3;
  color: white;
  font-size: 14px;
  line-height: 29px;
  text-align: center;
  white-space: nowrap;
  letter-spacing: -0.3px;
}

.crumbs {
  flex: none;
  display: flex;
  align-items: center;
  box-sizing: border-box;
  height: 33px;
  padding-left: 179px;
  font-size: 13.5px;
  letter-spacing: -0.2px;
}

.crumbs a {
  color: #0067b8;
  text-decoration: none;
}

.crumb-sep {
  margin: 0 9px;
  color: #888;
}

.crumb-tools {
  display: flex;
  align-items: center;
  margin-left: auto;
  margin-right: 207px;
  font-size: 13px;
}

.crumb-book {
  width: 10px;
  height: 18px;
  margin-right: 7px;
}

.crumb-t1 {
  margin-right: 19px;
}

.crumb-share {
  width: 13px;
  height: 17px;
  margin-right: 7px;
}

.crumb-t2 {
  margin-right: 19px;
}

.crumb-t3 {
  margin-right: 16px;
}

.toggle {
  position: relative;
  display: block;
  width: 41px;
  height: 15px;
  border-radius: 8px;
  background-color: #0067b8;
}

.toggle::after {
  content: "";
  position: absolute;
  right: 4px;
  top: 3px;
  width: 9px;
  height: 9px;
  border-radius: 50%;
  background-color: white;
}

/* Three-column document */
.doc {
  flex: 1;
  min-height: 0;
  display: grid;
  grid-template-columns: 341px 882px 187px;
  grid-template-rows: minmax(0, 1fr);
  column-gap: 45px;
  overflow: hidden;
}

.win-a .doc {
  padding-left: 189px;
}

.win-b .doc {
  padding-left: 179px;
}

.side {
  display: flex;
  flex-direction: column;
  min-height: 0;
  padding-bottom: 20px;
  box-sizing: border-box;
  font-size: 13px;
}

.side-label {
  flex: none;
  margin-top: 25px;
  height: 25px;
  line-height: 25px;
  font-size: 15.500px;
}

.picker,
.filter {
  flex: none;
  display: flex;
  align-items: center;
  box-sizing: border-box;
  height: 29px;
  border: 1px solid #e6e6e6;
  border-bottom-width: 2px;
  border-radius: 2px;
}

.picker {
  position: relative;
  padding-left: 9px;
  letter-spacing: -0.2px;
}

.picker-chev {
  position: absolute;
  right: 9px;
  top: 10px;
  width: 9px;
  height: 6px;
}

.filter {
  margin-top: 8px;
  border-top-width: 2px;
  padding-left: 7px;
  color: #666;
}

.filter-ic {
  width: 14px;
  height: 21px;
  margin-right: 8px;
}

.toc {
  flex: 1;
  min-height: 0;
  display: flex;
  margin-top: 8px;
  padding-left: 30px;
}

.toc-list {
  flex: 1;
  min-width: 0;
  overflow: hidden;
  list-style: none;
  margin: 0;
  padding: 0;
}

.toc-list li {
  height: 27.750px;
  line-height: 27.750px;
  padding-left: 15px;
  letter-spacing: -0.25px;
  color: #333;
}

.toc-list li:first-child {
  margin-top: -13px;
}

.toc-list .toc-on {
  background-color: #f0f0f0;
}

/* Article column */
.article {
  min-width: 0;
  font-size: 14.900px;
  padding-top: 20px;
}

h1 {
  margin: 0;
  height: 40px;
  line-height: 40px;
  font-size: 38px;
  font-weight: 400;
  padding-left: 2px;
  letter-spacing: -0.5px;
  white-space: nowrap;
}

.meta {
  display: flex;
  align-items: center;
  height: 20px;
  margin-top: 4px;
  font-size: 13px;
  color: #555;
  letter-spacing: -0.3px;
  white-space: pre;
}

.meta .who:first-of-type {
  margin-left: 7px;
}

.who {
  width: 14px;
  height: 18px;
  margin-left: 3px;
}

.lede {
  width: fit-content;
  font-size: 14.900px;
  border: 5px solid #ed1c24;
  white-space: nowrap;
  line-height: 23px;
}

.win-a .lede {
  margin: 7px 0 0 -11px;
  padding: 8px 7px 1px 6px;
}

.win-b .lede {
  margin: 11px 0 0 -9px;
  padding: 5px 12px 5px 4px;
  font-size: 14.500px;
  letter-spacing: -0.1px;
}

h2 {
  margin: 31px 0 0;
  height: 36px;
  line-height: 36px;
  font-size: 27px;
  font-weight: 400;
  letter-spacing: -0.5px;
}

.arg + h2 {
  margin-top: 30px;
}

.h-first {
  margin-top: 25px;
}

.win-b .h-first {
  margin-top: 20px;
}

.code {
  margin-top: 12px;
  border: 2px solid #e3e3e3;
  height: 95px;
  box-sizing: border-box;
  background-color: #f9f9f9;
}

.code-head {
  display: flex;
  justify-content: flex-end;
  height: 27px;
  border-bottom: 2px solid #e3e3e3;
  background-color: #f0f0f0;
  font-size: 12px;
}

.copy {
  display: flex;
  align-items: center;
  width: 66px;
  box-sizing: border-box;
  padding-left: 15px;
  border-left: 1px solid #e6e6e6;
}

.copy-ic {
  width: 13px;
  height: 19px;
  margin-right: 4px;
}

.code-body {
  padding: 30px 0 0 14px;
  height: 20px;
  line-height: 20px;
  font-family: "Liberation Mono", "DejaVu Sans Mono", monospace;
  font-size: 12px;
  color: #1c1c1c;
}

.kw {
  color: #1f3a5f;
}

.arg {
  margin: 13px 0 0;
  line-height: 24px;
  white-space: nowrap;
}

.arg + .arg {
  margin-top: 15px;
}

.para {
  margin: 13px 0 0;
  line-height: 24px;
  white-space: nowrap;
}

.win-b .arg,
.win-b .para {
  font-size: 14.600px;
  letter-spacing: -0.18px;
}

.alert {
  margin-top: 15px;
  height: 95px;
  padding: 0 16px;
  border-radius: 5px;
  box-sizing: border-box;
  overflow: hidden;
}

.alert p {
  margin: 17px 0 0;
  line-height: 24px;
}

.alert-note {
  background-color: #e2daf1;
}

.alert-tip {
  height: 120px;
  background-color: #deeffe;
}

.alert-title {
  display: flex;
  align-items: center;
  height: 20px;
  margin-top: 19px;
  font-size: 15px;
  font-weight: 600;
}

.alert-note .alert-title {
  color: #4b2a8a;
}

.alert-tip .alert-title {
  color: #004173;
}

.alert-note a {
  color: #3c2a86;
}

/* Right rail */
.rail {
  font-size: 13px;
}

.rail-q {
  margin-top: 25px;
  height: 24px;
  line-height: 24px;
  font-size: 15.500px;
  font-weight: 500;
  white-space: nowrap;
}

.vote {
  display: flex;
  align-items: center;
  height: 30px;
  margin-top: 3px;
  padding-left: 8px;
  color: #555;
}

.vote-y {
  margin-right: 12px;
}

.thumb-ic {
  width: 12px;
  height: 15px;
  margin-right: 9px;
}

.rail-title {
  margin-top: 4px;
  padding-top: 10px;
  border-top: 1px solid #e3e3e3;
  height: 24px;
  line-height: 24px;
  font-size: 16px;
  font-weight: 500;
}

.rail-links {
  list-style: none;
  margin: 7px 0 0;
  padding: 0;
  color: #0067b8;
}

.rail-links li {
  height: 24.500px;
  line-height: 24.500px;
  padding-left: 6px;
  letter-spacing: -0.2px;
}

.rail-links .rail-on {
  height: 21px;
  line-height: 21px;
  margin-bottom: 4px;
  padding-left: 3px;
  border-left: 3px solid #0067b8;
  font-weight: 600;
}

/* Taskbar */
.taskbar {
  flex: none;
  display: flex;
  align-items: flex-start;
  height: 50px;
  overflow: hidden;
  background-color: #050e12;
}

.win-b .taskbar {
  height: 44px;
}

.tb-start {
  flex: none;
  display: flex;
  align-items: center;
  width: 49px;
  height: 50px;
  padding-left: 9px;
  box-sizing: border-box;
}

.win-b .tb-start {
  width: 39px;
  padding-left: 0;
}

.tb-win {
  width: 20px;
  height: 20px;
}

.tb-search {
  flex: none;
  display: flex;
  align-items: center;
  box-sizing: border-box;
  width: 430px;
  height: 50px;
  padding-left: 15px;
  background-color: #f1f1f1;
  border-top: 1px solid #bbb;
  border-bottom: 1px solid #bbb;
  border-left: 1px solid #bbb;
  color: #444;
  font-size: 20.800px;
}

.tb-glass {
  width: 20px;
  height: 24px;
  margin-right: 16px;
  color: #333;
}

.tb-apps {
  display: flex;
  flex: none;
}

.tb-cell {
  position: relative;
  display: flex;
  align-items: center;
  justify-content: center;
  width: 62px;
  height: 50px;
}

.tb-ic {
  width: 30px;
  height: 36px;
}

.tb-ic-task {
  width: 20px;
  height: 22px;
}

.tb-now {
  background-color: #2e3538;
}

.tb-open::after {
  content: "";
  position: absolute;
  left: 4px;
  right: 4px;
  bottom: 0;
  height: 3px;
  background-color: #76b9ed;
}

.tray {
  margin-left: auto;
  display: flex;
  align-items: center;
  height: 50px;
  border-right: 1px solid #333;
  margin-right: 3px;
}

.win-b .tray {
  margin-right: 1px;
}

.tray-ic {
  width: 20px;
  height: 24px;
  margin-right: 10px;
}

.tray-people {
  margin-right: 24px;
}

.tray-ime {
  margin: 0 0 0 7px;
  width: 18px;
}

.clock {
  width: 110px;
  margin-left: 4px;
  text-align: center;
  font-size: 15.500px;
  line-height: 23px;
  color: #e6e6e6;
  letter-spacing: -0.2px;
}

.notify {
  position: relative;
  display: flex;
  justify-content: center;
  width: 55px;
  padding-right: 17px;
  box-sizing: border-box;
}

.notify-ic {
  width: 22px;
  height: 26px;
}

.notify-badge {
  position: absolute;
  left: 22px;
  top: 11px;
  width: 18px;
  height: 18px;
  border-radius: 50%;
  background-color: #444;
  color: white;
  font-size: 12px;
  line-height: 18px;
  text-align: center;
}
```
